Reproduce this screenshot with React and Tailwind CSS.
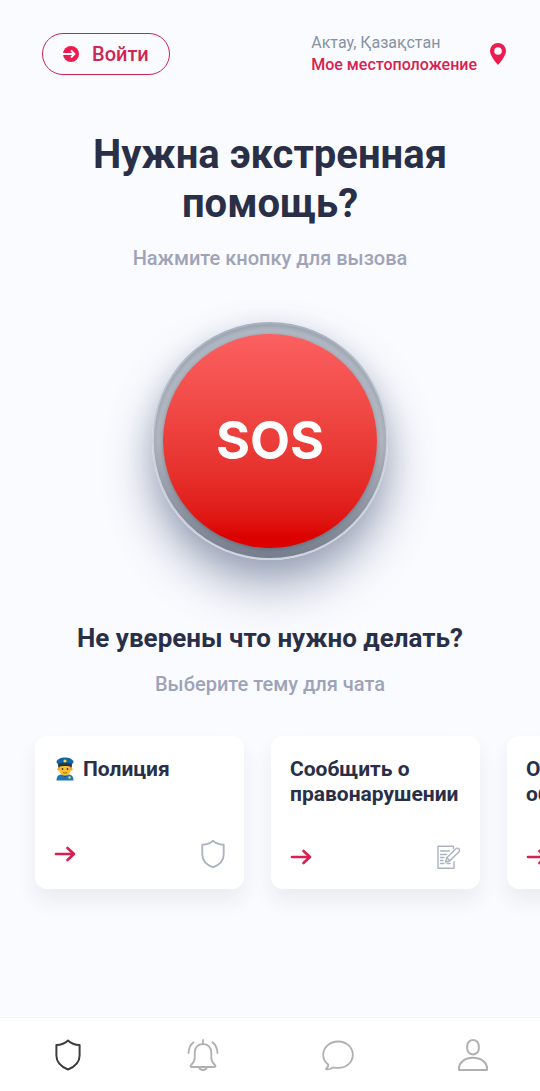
import React from 'react';

const ShieldIcon = ({ className }) => (
  <svg viewBox="0 0 26 32" fill="none" stroke="currentColor" strokeLinejoin="round" className={className}>
    <path d="M13 1.500C10.200 4.300 6 5.900 1.400 6v10.500c0 6.400 4.600 11.200 11.600 14 7-2.800 11.600-7.600 11.600-14V6C20 5.900 15.800 4.300 13 1.500Z" />
  </svg>
);

const NoteIcon = ({ className }) => (
  <svg viewBox="0 0 24 24" fill="none" stroke="currentColor" strokeLinecap="round" strokeLinejoin="round" className={className}>
    <path d="M16.500 3.200V1.200H1v22h16v-6.500" />
    <path d="M3.500 6h9M3.500 9.500h6M3.500 12.500h3.500M3.500 15.500h2.500M3.500 18.500h3.500M10 18.500h3" />
    <path d="m8.500 17 1.300-4.300 8.800-8.800c1-1 2.400-1.100 3.300-.2s.8 2.300-.2 3.300l-8.800 8.800L8.500 17Z" />
    <path d="m9.800 12.700 3.100 3.100" />
  </svg>
);

const BellIcon = ({ className }) => (
  <svg viewBox="0 0 32 32" fill="none" stroke="currentColor" strokeLinecap="round" strokeLinejoin="round" className={className}>
    <path d="M16 1v4M16 5c-5 0-8.300 3.700-8.300 8.500v5.500c0 3.500-1.600 5.200-3.700 7.200-.9.900-.5 1.800.6 1.800h22.800c1.100 0 1.500-.9.600-1.800-2.100-2-3.700-3.700-3.700-7.200v-5.500C24.300 8.700 21 5 16 5Z" />
    <path d="M12 28.200c.5 1.800 2 2.800 4 2.800s3.500-1 4-2.800M6.500 3.200C3.500 5.500 1.700 9 1.500 14M25.500 3.200c3 2.300 4.800 5.800 5 10.800" />
  </svg>
);

const ChatIcon = ({ className }) => (
  <svg viewBox="0 0 32 32" fill="none" stroke="currentColor" strokeLinejoin="round" className={className}>
    <path d="M16.200 2.500C7.800 2.500 1.200 8.300 1.200 15.700c0 4.300 2 7.500 5 9.700.3 1.800-.6 3.200-2 4.200-.3.400 0 .8.500.8 2.500 0 4.800-.7 6.300-2.100 1.700.4 3.400.6 5.200.6 8.400 0 14.600-5.800 14.600-13.200S24.600 2.500 16.200 2.500Z" />
  </svg>
);

const UserIcon = ({ className }) => (
  <svg viewBox="0 0 32 32" fill="none" stroke="currentColor" strokeLinejoin="round" className={className}>
    <rect x="10.200" y="1" width="11.600" height="14.500" rx="5.800" />
    <path d="M2 31v-1.800C2 23.500 8 18.800 16 18.800s14 4.700 14 10.400V31H2Z" />
  </svg>
);

const ArrowIcon = () => (
  <svg viewBox="0 0 22 16" fill="none" stroke="currentColor" strokeWidth="2.600" strokeLinecap="round" strokeLinejoin="round" className="w-[22px] h-4 text-[#d91e50]">
    <path d="M2 8h18M13.500 2l6.500 6-6.500 6" />
  </svg>
);

const LoginIcon = () => (
  <svg viewBox="0 0 16 16" className="w-4 h-4">
    <circle cx="8" cy="8" r="8" fill="#ee1c4e" />
    <path d="M0 8h10.500M8 4.500 11.500 8 8 11.500" fill="none" stroke="#fff" strokeWidth="1.800" />
  </svg>
);

const PinIcon = () => (
  <svg viewBox="0 0 16 22" className="w-4 h-[22px]">
    <path fillRule="evenodd" fill="#ee1c4e" d="M8 0a8 8 0 0 0-8 8c0 5.500 8 14 8 14s8-8.500 8-14a8 8 0 0 0-8-8Zm0 4.200a3.800 3.800 0 1 1 0 7.600 3.800 3.800 0 0 1 0-7.600Z" />
  </svg>
);

const OfficerIcon = () => (
  <svg viewBox="-1 0 21 24" className="w-[21px] h-6 shrink-0">
    <path d="M1.500 23.500c0-4 2-6 5-6h7c3 0 5 2 5 6Z" fill="#1f77b8" />
    <path d="m7 17 3 3.500 3-3.500Z" fill="#124f80" />
    <path d="M3.500 6h13v6h-13z" fill="#4a3320" />
    <ellipse cx="10" cy="12" rx="6" ry="6.800" fill="#fbc02d" />
    <circle cx="3.800" cy="12.200" r="1.400" fill="#f5a623" />
    <circle cx="16.200" cy="12.200" r="1.400" fill="#f5a623" />
    <path d="M3.300 7h13.400v3C13 8.700 7 8.700 3.300 10Z" fill="#3a2c20" />
    <path d="M1.500 4.500C2.500 2 6 .5 10 .5s7.500 1.500 8.500 4c.2 1.200-1.300 2.300-2 3-3.800-1.200-9.200-1.200-13 0-.7-.7-2.200-1.800-2-3Z" fill="#1565a5" />
    <path d="M3.500 6.500c3.800-1.300 9.200-1.300 13 0v1.800c-3.800-1-9.200-1-13 0Z" fill="#173f63" />
    <circle cx="10" cy="4" r="1.600" fill="#fdd835" />
    <circle cx="7.500" cy="12" r=".9" fill="#493122" />
    <circle cx="12.500" cy="12" r=".9" fill="#493122" />
    <path d="M7.800 15.300c1.300 1 3.100 1 4.400 0" stroke="#8a5a20" strokeWidth=".9" fill="none" />
    <circle cx="14.500" cy="20.500" r="1.200" fill="#fdd835" />
  </svg>
);

const topics = [
  { title: 'Полиция', emoji: <OfficerIcon />, icon: <ShieldIcon className="w-6 h-[30px] stroke-2" /> },
  { title: 'Сообщить о правонарушении', icon: <NoteIcon className="w-6 h-6 stroke-[1.4]" /> },
  { title: 'Оставить обращение', icon: <NoteIcon className="w-6 h-6 stroke-[1.4]" /> },
];

const tabs = [
  { label: 'Помощь', icon: <ShieldIcon className="w-[26px] h-8 stroke-2" />, active: true },
  { label: 'Уведомления', icon: <BellIcon className="w-8 h-8 stroke-[1.8]" /> },
  { label: 'Чат', icon: <ChatIcon className="w-8 h-8 stroke-[1.8]" /> },
  { label: 'Профиль', icon: <UserIcon className="w-8 h-8 stroke-2" /> },
];

const Header = () => (
  <header className="flex items-center justify-between pt-8 pr-[34px] pl-[42px]">
    <button className="flex items-center gap-[13px] h-[42px] px-5 rounded-full border border-[#cc2450] text-xl font-medium text-[#cf2652]">
      <LoginIcon />
      Войти
    </button>
    <a href="#location" className="flex items-center gap-[13px] text-base leading-[22px]">
      <span>
        <span className="block text-[#8592a3]">Актау, Қазақстан</span>
        <span className="block font-medium text-[#d91e50]">Мое местоположение</span>
      </span>
      <PinIcon />
    </a>
  </header>
);

const SosButton = () => (
  <button className="w-[236px] h-[238px] p-[2px] rounded-full bg-linear-to-b from-[#a9b1bf] via-[#ccd0da] to-[#d0d3e0] shadow-[0_26px_48px_rgba(70,85,120,0.48),0_8px_24px_rgba(70,85,120,0.16)]">
    <span className="flex items-center justify-center w-full h-full rounded-full bg-linear-to-b from-[#b4bbc6] via-[#b2b7c0] to-[#777f8e] shadow-[inset_0_3px_5px_rgba(125,135,155,0.5)]">
      <span className="flex items-center justify-center w-[214px] h-[214px] rounded-full bg-linear-to-b from-[#fb6060] to-[#dc0000] to-95% shadow-[0_1px_4px_rgba(60,60,80,0.4)] font-[Inter] text-[52px] font-bold text-white">
        SOS
      </span>
    </span>
  </button>
);

const TopicCard = ({ topic }) => (
  <button className="flex flex-col justify-between shrink-0 w-[209px] h-[153px] px-[19px] pt-[21px] pb-5 rounded-xl bg-white text-left shadow-[0_12px_20px_rgba(40,45,60,0.07)]">
    <span className="flex gap-2 text-[21px] leading-[25px] font-bold text-[#2a2f48]">
      {topic.emoji}
      {topic.title}
    </span>
    <span className="flex items-center justify-between w-full text-[#adb3c1]">
      <ArrowIcon />
      {topic.icon}
    </span>
  </button>
);

const TabBar = () => (
  <nav className="grid grid-cols-4 mt-auto h-[74px] border-t border-[#f2f3f5] bg-white">
    {tabs.map((tab) => (
      <a
        key={tab.label}
        href="#tab"
        aria-label={tab.label}
        className={tab.active ? 'flex items-center justify-center text-[#3d3d40]' : 'flex items-center justify-center text-[#b0b0b3]'}
      >
        {tab.icon}
      </a>
    ))}
  </nav>
);

const App = () => {
  return (
    <div className="flex flex-col min-h-screen bg-[#fafbff] font-[Roboto,sans-serif]">
      <Header />

      <main className="flex flex-col items-center text-center">
        <h1 className="max-w-[400px] mt-[54px] text-[40px] leading-[49px] font-bold text-[#2a2f48]">
          Нужна экстренная помощь?
        </h1>
        <p className="mt-[18px] mb-[52px] text-xl leading-6 font-medium text-[#a0a3b8]">
          Нажмите кнопку для вызова
        </p>

        <SosButton />

        <h2 className="mt-16 text-[26px] leading-7 font-bold text-[#2a2f48]">Не уверены что нужно делать?</h2>
        <p className="mt-5 text-xl leading-6 font-medium text-[#9da3b8]">Выберите тему для чата</p>

        {/* Topics */}
        <div className="flex gap-[27px] w-full px-[35px] pt-10 pb-12 overflow-x-auto [scrollbar-width:none]">
          {topics.map((topic) => (
            <TopicCard key={topic.title} topic={topic} />
          ))}
        </div>
      </main>

      <TabBar />
    </div>
  );
};

export default App;
